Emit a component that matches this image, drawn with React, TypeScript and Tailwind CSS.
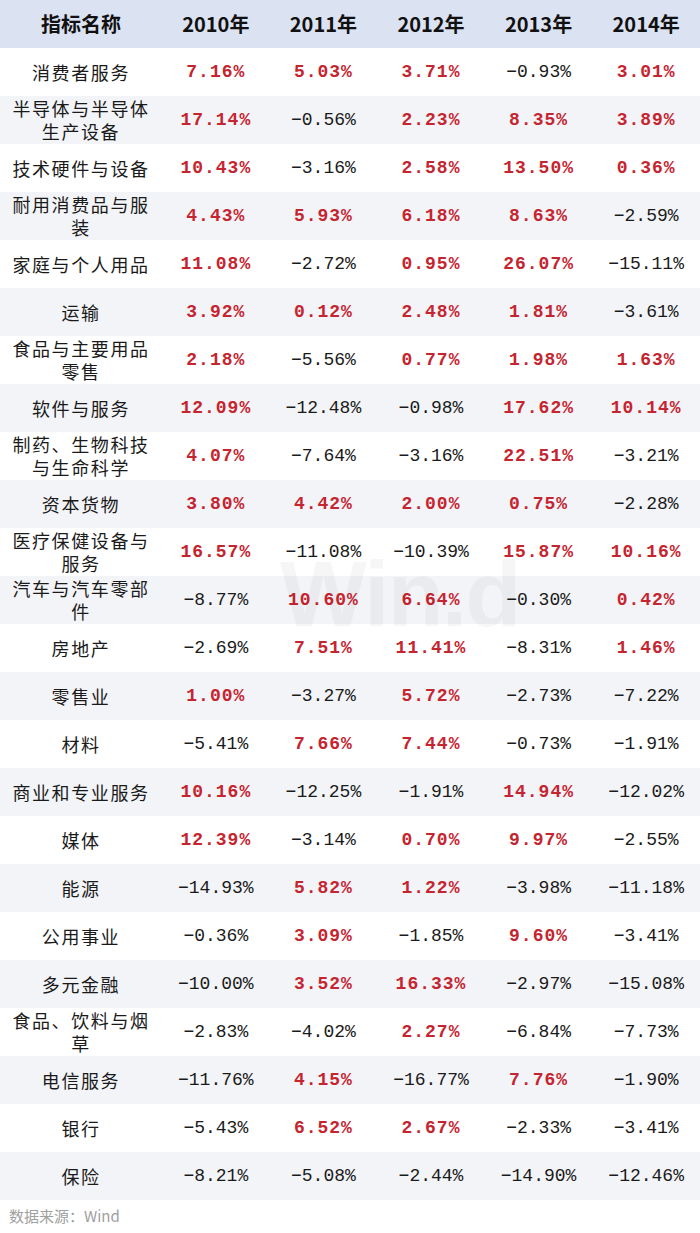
const years = ['2010年', '2011年', '2012年', '2013年', '2014年']

const rows: [string, number[]][] = [
  ['消费者服务', [7.16, 5.03, 3.71, -0.93, 3.01]],
  ['半导体与半导体生产设备', [17.14, -0.56, 2.23, 8.35, 3.89]],
  ['技术硬件与设备', [10.43, -3.16, 2.58, 13.5, 0.36]],
  ['耐用消费品与服装', [4.43, 5.93, 6.18, 8.63, -2.59]],
  ['家庭与个人用品', [11.08, -2.72, 0.95, 26.07, -15.11]],
  ['运输', [3.92, 0.12, 2.48, 1.81, -3.61]],
  ['食品与主要用品零售', [2.18, -5.56, 0.77, 1.98, 1.63]],
  ['软件与服务', [12.09, -12.48, -0.98, 17.62, 10.14]],
  ['制药、生物科技与生命科学', [4.07, -7.64, -3.16, 22.51, -3.21]],
  ['资本货物', [3.8, 4.42, 2.0, 0.75, -2.28]],
  ['医疗保健设备与服务', [16.57, -11.08, -10.39, 15.87, 10.16]],
  ['汽车与汽车零部件', [-8.77, 10.6, 6.64, -0.3, 0.42]],
  ['房地产', [-2.69, 7.51, 11.41, -8.31, 1.46]],
  ['零售业', [1.0, -3.27, 5.72, -2.73, -7.22]],
  ['材料', [-5.41, 7.66, 7.44, -0.73, -1.91]],
  ['商业和专业服务', [10.16, -12.25, -1.91, 14.94, -12.02]],
  ['媒体', [12.39, -3.14, 0.7, 9.97, -2.55]],
  ['能源', [-14.93, 5.82, 1.22, -3.98, -11.18]],
  ['公用事业', [-0.36, 3.09, -1.85, 9.6, -3.41]],
  ['多元金融', [-10.0, 3.52, 16.33, -2.97, -15.08]],
  ['食品、饮料与烟草', [-2.83, -4.02, 2.27, -6.84, -7.73]],
  ['电信服务', [-11.76, 4.15, -16.77, 7.76, -1.9]],
  ['银行', [-5.43, 6.52, 2.67, -2.33, -3.41]],
  ['保险', [-8.21, -5.08, -2.44, -14.9, -12.46]],
]

const cjk = "font-['Noto_Sans_CJK_SC',sans-serif]"
const mono = "font-['Liberation_Mono','Noto_Sans_CJK_SC',monospace]"

function fmt(v: number) {
  const s = Math.abs(v).toFixed(2) + '%'
  return v < 0 ? '−' + s : s
}

export default function App() {
  return (
    <div className="relative w-[700px] bg-white">
      <div className="flex h-[48px] bg-[#dbe2f1] text-[20px] font-bold text-[#111]">
        <div className={`flex w-[162px] items-center justify-center ${cjk}`}>
          指标名称
        </div>
        {years.map((y) => (
          <div
            key={y}
            className={`flex flex-1 items-center justify-center ${cjk}`}
          >
            {y}
          </div>
        ))}
      </div>

      {rows.map(([name, vals], i) => (
        <div
          key={name}
          className={`flex h-[48px] ${i % 2 ? 'bg-[#f3f4f8]' : 'bg-white'}`}
        >
          <div className="flex w-[162px] items-center justify-center px-[9px]">
            <span
              className={`text-center text-[18px] leading-[23px] tracking-[1.6px] text-[#1a1a1a] ${cjk}`}
            >
              {name}
            </span>
          </div>
          {vals.map((v, j) => (
            <div
              key={j}
              className={`flex flex-1 items-center justify-center text-[18px] ${mono} ${
                v > 0
                  ? 'font-bold tracking-[1px] text-[#c52530]'
                  : 'text-[#1a1a1a]'
              }`}
            >
              {fmt(v)}
            </div>
          ))}
        </div>
      ))}

      <div className="flex h-[33px] items-center px-[9px]">
        <span className={`text-[15px] text-[#a0a0a0] ${cjk}`}>
          数据来源：Wind
        </span>
      </div>

      {/* faint watermark over the table */}
      <div className="pointer-events-none absolute left-[280px] top-[548px] font-['Liberation_Sans',sans-serif] text-[92px] font-bold leading-none tracking-[-2px] text-black/[0.035]">
        Win.d
      </div>
    </div>
  )
}
